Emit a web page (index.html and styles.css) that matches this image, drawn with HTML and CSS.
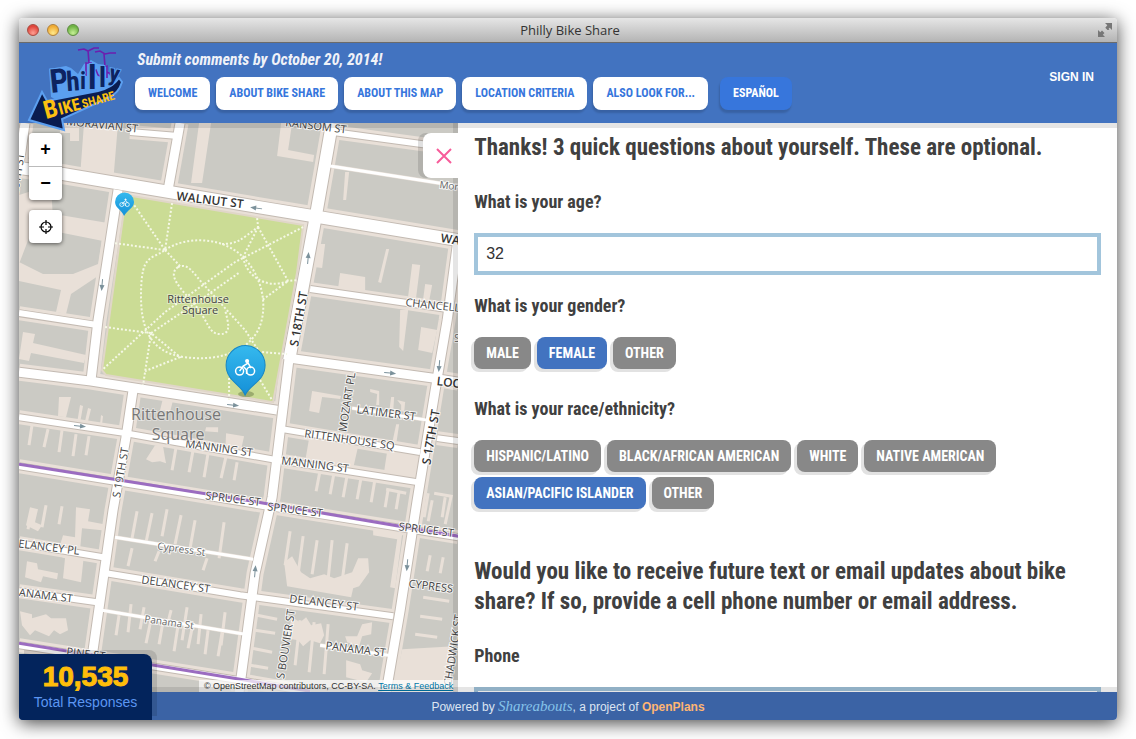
FILE: index.html
```html
<!DOCTYPE html>
<html lang="en">
<head>
<meta charset="utf-8">
<title>Philly Bike Share</title>
<link rel="stylesheet" href="styles.css">
</head>
<body>
<div class="window">
  <div class="titlebar">
    <div class="lights"><span class="light red"></span><span class="light amber"></span><span class="light green"></span></div>
    <div class="window-title">Philly Bike Share</div>
    <svg class="expand" width="16" height="16" viewBox="0 0 16 16" fill="#777"><path d="M8 1h7v7l-2.300-2.300-1.200 1.200 1 1L10.500 8 8.300 5.800 10.300 3.300z"/><path d="M1 8l2.300 2.200 1.700-1.700 2.500 2.500-1.700 1.700L8 15H1z"/></svg>
  </div>
  <header class="site-header">
    <a class="logo" href="#" aria-label="Philly Bike Share">
      <svg width="96" height="88" viewBox="27 44 96 88">
        <path d="M49 69L66 66 71 68 78 74 84 64 91 60 98 64 107 65 109 75 115 78 115 92 75 110 51 97z" fill="#5b9ff0"/>
        <path d="M29 120L42 92 47 101 98 91Q112 88 119 78L122 82Q119 93 108 98L62 119 64 130z" fill="#0a1c50" stroke="#5b9ff0" stroke-width="2"/>
        <g fill="none" stroke="#6c1fae" stroke-width="1.600">
          <path d="M78 50l6-1 4 2 6-3 5 0M95 52l5-1 5 3 5-1 6 0M88 50l1 13M104 54l1 12M86 76V63h5v14M102 75V66h5v12M92 72l4-2 2 5 4 2M107 72l4 2 1 6"/>
        </g>
        <g class="philly"><text x="51" y="93" transform="rotate(-6 51 93)" font-size="33">P</text><text x="67" y="91" transform="rotate(-4 67 91)" font-size="27">h</text><text x="80" y="89" font-size="24">i</text><text x="88" y="89" font-size="34">l</text><text x="99" y="87" font-size="28">l</text><text x="108" y="80" transform="rotate(12 108 80)" font-size="23">y</text></g>
        <g class="bikeshare"><text x="46" y="119" transform="rotate(-15 46 119)" font-size="25">B</text><text x="60" y="115" transform="rotate(-15 60 115)" font-size="17">IKE</text><text x="83" y="108" transform="rotate(-15 83 108)" font-size="12">SHARE</text></g>
      </svg>
    </a>
    <div class="header-body">
      <p class="deadline">Submit comments by October 20, 2014!</p>
      <nav class="nav">
        <a href="#">WELCOME</a><a href="#">ABOUT BIKE SHARE</a><a href="#">ABOUT THIS MAP</a><a href="#">LOCATION CRITERIA</a><a href="#">ALSO LOOK FOR...</a><a href="#" class="language">ESPAÑOL</a>
      </nav>
    </div>
    <a class="signin" href="#">SIGN IN</a>
  </header>
  <main class="main">
    <section class="map" aria-label="Map">
      <svg class="map-canvas" viewBox="19 123 439 569" preserveAspectRatio="xMinYMin slice">
        <defs>
          <g id="wide">
            <path d="M19 168L63 174 258 207 458 240"/><path d="M332 123L315 220 289 360"/>
          </g>
          <g id="medium">
            <path d="M289 358L433 378 458 382"/><path d="M458 238L447 320 435 390 417 500 400 610 386 692"/><path d="M289 358L272 497 255 573 239 692"/>
            <path d="M180 123L168 190"/><path d="M118 190L98 320 91 380"/><path d="M133 390L126 437 113 510 87 692"/><path d="M19 372L91 381 277 410"/><path d="M25 123L19 165"/>
          </g>
          <g id="narrow">
            <path d="M19 313L97 325"/><path d="M19 417L125 433 277 460 417 482"/><path d="M282 429L420 452"/><path d="M437 438L458 441"/>
            <path d="M19 466L258 505 458 537"/><path d="M310 289L407 303 447 309"/><path d="M333 132L458 149"/><path d="M130 132L178 136"/>
            <path d="M19 543L103 557"/><path d="M106 573L240 595 393 616"/><path d="M19 591L97 602"/><path d="M19 645L240 680 310 692"/>
          </g>
          <g id="thin">
            <path d="M330 166L458 186"/><path d="M115 537L253 559"/><path d="M102 610L245 634"/><path d="M320 645L388 655"/><path d="M352 408L427 420"/>
          </g>
          <g id="rider" fill="none" stroke="#fff" stroke-width="1.500"><circle cx="-5.500" cy="3" r="4"/><circle cx="5.500" cy="3" r="4"/><path d="M-5.500 3L-2-2 1.500 2V6M-2-2L3-5 6 0"/><circle cx="2" cy="-7" r="1.300" fill="#fff"/></g>
          <linearGradient id="pinfill" x2="0" y2="1"><stop offset="0" stop-color="#35b9ee"/><stop offset="1" stop-color="#1590d8"/></linearGradient>
          <g id="arrow" fill="#7b919b" stroke="#7b919b"><path d="M-6 0H3"/><path d="M6 0L0-2.500V2.500z" stroke="none"/></g>
        </defs>
        <rect x="19" y="123" width="439" height="569" fill="#cbcac4"/>
        <g class="verge">
          <use href="#wide" stroke-width="20"/><use href="#medium" stroke-width="17"/><use href="#narrow" stroke-width="14"/><use href="#thin" stroke-width="4"/>
        </g>
        <g class="lots">
          <path d="M84 123h34l-5 60-33-6zM60 123h19v18h-9v-8h-10zM199 123h12l-9 60h-11zM281 123h11l-4 27 26 5-1 7-36-6z"/>
          <path d="M19 195l32-10 2 35-18 2-16 42zM54 214l54 9-5 18-50-10zM19 262l24 12 30 0 30-12-2 12-30 20-5 20-10-2 5-22-42-9zM92 225l17 3-4 48-8-1 5-36z"/>
          <path d="M317 244h8l-3 24-8-1zM340 273l25 4v15l-27-4zM386 249h3l-8 34-3-1zM412 264l8 1-5 40-8-1zM425 284l7 1-4 21h-6zM345 172h4l-3 28h-3zM400 310h8l-5 41-4-4zM421 327l16 3-5 23-14-3z"/>
          <path d="M23 332l12 2-2 9 53 12-2 8-53-10-2 8-10-2zM59 397h12l-5 20-8-1zM80 405l3 1-3 17h-3zM88 408l3 1-3 12h-3zM101 415l2 1-1 8h-2z"/>
          <path d="M312 391l29 5-1 3-18-2-3 16-10-2zM370 389l9 2v14h-3l1-11-7-2zM391 397h3l-1 15h-4zM397 400l8 2-1 10-3-1v-6zM396 424h3l-3 20-4-1zM309 438l49 8-5 22-48-7zM387 451l30 4-4 20-29-4z"/>
          <path d="M155 445l8 1 2 12 1 5-6-2-8 1-6-3zM226 433l18 3-5 22-14-3zM206 427h12v5l-13-1zM163 398l10 2-3 12-10-2z"/>
          <path d="M76 507l14 2-2 12 16 3-2 6-20-2-2 22 4 4-3 28-18-4 2-20-8-3 6-20 12 2zM30 507l8 2-3 13 7 3-4 6-12-6zM27 561l10 2 1 6 20 4-1 6-14-3-2 6-16-5zM20 611l12 3v4l14-4 5 4 15 0 2 12-8 4-6-4-5 6-14-6-5 5-8-10z"/>
          <path d="M284 562l8-6 9 16 9 6 14-4 10 4 18-6 6-14 10 0 1 14-10 14-6 2-2 9-64-11zM373 529l29 5-7 54-5-1 7-48-24-4zM292 617l8 5 6-5 5 8 10-2 3 12-4 8-10-3-7 6-5-6-12-2zM345 636h12l5-12 10-2-1 12-9 2-3 10-12-4zM346 660l14 4 2 6 10 3-6 9-20-5zM402 649l52-3-5 46h-56z"/>
        </g>
        <g class="alleys">
          <path d="M32 425l-3 20M48 429l-4 18M62 430l-3 22M76 434l-3 22M89 436l-3 19M160 440l-4 19M176 447l-4 23M193 450l-4 22M208 453l-4 24M226 456l-5 22M237 462l-3 18M320 470l-4 21M334 472l-4 22M347 475l-4 22M361 477l-4 22M375 478l-4 24M388 489l-3 18M399 491l-3 18M386 489l20 4"/>
          <path d="M32 509l-4 20M46 505l-4 22M62 506l-3 18M137 511l-5 27M152 513l-6 29M167 509l-5 27M181 515l-6 29M195 520l-5 28M224 522l-5 36M132 548l-4 18M159 551l-4 10M207 558l-4 12M290 531l-5 34M303 536l-5 38M317 540l-5 34M332 540l-4 39M347 543l-5 38M131 604l-3 28M144 607l-4 22M171 610l-4 16M187 607l-5 33M201 614l-3 30M225 612l-4 33M119 615l-3 20M151 619l-5 24M163 621l-4 23M178 625l-4 26M192 628l-4 20M208 630l-3 24M222 632l-4 24"/>
          <path d="M430 555l-3 16M443 557l-3 16M423 597l26 4M420 616l22 3M415 634l22 3M432 500l-4 21M445 497l-3 20M257 615l20 4M255 630l20 3M252 648l20 4M250 665l18 3M300 620l-5 45M314 622l-5 50M328 624l-4 50M428 493l-4 24M434 493l17 3-6 28"/>
        </g>
        <g class="casing">
          <use href="#wide" stroke-width="14"/><use href="#medium" stroke-width="11"/><use href="#narrow" stroke-width="8"/>
        </g>
        <g class="road">
          <use href="#wide" stroke-width="12"/><use href="#medium" stroke-width="9"/><use href="#narrow" stroke-width="6"/><use href="#thin" stroke-width="3"/>
        </g>
        <g fill="none" stroke="#9b6cc0" stroke-width="3"><path d="M19 464L258 502 458 536"/><path d="M19 643L240 679 310 691"/></g>
        <path d="M126 195L303 225 297 272 273 402 106 375 102 370z" fill="#cbdc95" stroke="#e0d6c8" stroke-width="2"/>
        <g class="paths">
          <path d="M132 202L165 250 M172 203L165 250 114 243M303 227L235 262 165 312 102 370"/>
          <path d="M165 250C185 236 222 236 243 257S268 310 258 330 220 362 184 357 140 325 141 290 150 260 165 250"/>
          <path d="M165 250L180 266M178 267C188 262 194 274 204 285L245 330 258 350M178 267C166 275 182 290 195 305S208 334 220 334 228 322 225 310M257 218L258 227C240 240 238 244 220 244M258 227L288 281 297 280M243 257C246 275 265 290 288 281L262 300M105 327L151 333 180 357 145 371M151 333L143 385M151 333L200 300 240 272M229 362V400M262 352L287 354M258 227L243 257M260 380L272 400"/>
        </g>
        <g class="street bold">
          <text transform="translate(176 200) rotate(7)">WALNUT ST</text><text transform="translate(440 242) rotate(8)">WALNUT</text><text transform="translate(298 347) rotate(-80)">S 18TH ST</text><text transform="translate(436 385) rotate(7)">LOCUST ST</text><text transform="translate(430 465) rotate(-80)">S 17TH ST</text>
        </g>
        <g class="street">
          <text transform="translate(66 125) rotate(6)">MORAVIAN ST</text><text transform="translate(285 126) rotate(7)">RANSOM ST</text><text transform="translate(405 306) rotate(6)">CHANCELLOR</text><text transform="translate(356 413) rotate(7)">LATIMER ST</text><text transform="translate(304 437) rotate(8)">RITTENHOUSE SQ</text><text transform="translate(346 432) rotate(-81)">MOZART PL</text><text transform="translate(185 447) rotate(8)">MANNING ST</text><text transform="translate(281 464) rotate(7)">MANNING ST</text><text transform="translate(120 498) rotate(-80)">S 19TH ST</text><text transform="translate(205 499) rotate(7)">SPRUCE ST</text><text transform="translate(267 510) rotate(7)">SPRUCE ST</text><text transform="translate(398 530) rotate(7)">SPRUCE ST</text><text transform="translate(10 546) rotate(7)">DELANCEY PL</text><text transform="translate(141 583) rotate(8)">DELANCEY ST</text><text transform="translate(289 602) rotate(7)">DELANCEY ST</text><text transform="translate(12 595) rotate(7)">PANAMA ST</text><text transform="translate(325 649) rotate(7)">PANAMA ST</text><text transform="translate(408 587) rotate(7)">CYPRESS</text><text transform="translate(66 655) rotate(7)">PINE ST</text><text transform="translate(284 679) rotate(-81)">S BOUVIER ST</text><text transform="translate(451 686) rotate(-81)">CHADWICK ST</text><text transform="translate(18 195) rotate(-81)">20TH ST</text>
        </g>
        <g class="street small"><text transform="translate(439 188) rotate(7)">Moravian</text><text transform="translate(157 549) rotate(8)">Cypress St</text><text transform="translate(144 622) rotate(8)">Panama St</text><text x="454" y="342">S</text></g>
        <g class="place"><text x="198" y="303">Rittenhouse</text><text x="200" y="314">Square</text></g>
        <g class="place large"><text x="176" y="420">Rittenhouse</text><text x="178" y="440">Square</text></g>
        <use href="#arrow" transform="translate(256 208) rotate(188)"/><use href="#arrow" transform="translate(308 258) rotate(-85)"/><use href="#arrow" transform="translate(102 285) rotate(95)"/><use href="#arrow" transform="translate(233 405) rotate(5)"/><use href="#arrow" transform="translate(80 426) rotate(5)"/><use href="#arrow" transform="translate(390 373) rotate(5)"/><use href="#arrow" transform="translate(439 366) rotate(95)"/><use href="#arrow" transform="translate(255 571) rotate(-85)"/><use href="#arrow" transform="translate(407 565) rotate(95)"/>
        <ellipse cx="246" cy="394" rx="8" ry="3" fill="#6c7b45" opacity=".5"/>
        <path d="M245 395C241 384 226 381 226 365a19.500 19.500 0 0 1 39 0C265 381 250 384 245 395z" fill="url(#pinfill)" stroke="#1786c4"/><use href="#rider" transform="translate(245 368)"/>
        <path d="M124 216C122 210 115 208 115 202a9.500 9.500 0 0 1 19 0C134 208 127 210 124 216z" fill="url(#pinfill)"/><use href="#rider" transform="translate(124.500 203) scale(.5)"/>
      </svg>
      <div class="map-controls">
        <div class="zoom"><button type="button" aria-label="Zoom in">+</button><button type="button" aria-label="Zoom out">−</button></div>
        <button type="button" class="locate" aria-label="Locate me"><svg width="14" height="14" viewBox="0 0 14 14" fill="none" stroke="#000" stroke-width="1.200"><circle cx="7" cy="7" r="5"/><path d="M7 0v5M7 9v5M0 7h5M9 7h5"/></svg></button>
      </div>
      <p class="attribution">© OpenStreetMap contributors, CC-BY-SA. <a href="#">Terms &amp; Feedback</a></p>
      <button type="button" class="close" aria-label="Close"><svg width="16" height="16" viewBox="0 0 16 16" stroke="#f75c9a" stroke-width="2"><path d="M1 1l14 14M15 1L1 15"/></svg></button>
    </section>
    <form class="panel">
      <h2>Thanks! 3 quick questions about yourself. These are optional.</h2>
      <label class="question" for="age">What is your age?</label>
      <input class="field" id="age" type="text" value="32">
      <fieldset class="gender">
        <legend>What is your gender?</legend>
        <div class="choices">
          <label><input type="radio" name="gender"><span>MALE</span></label>
          <label><input type="radio" name="gender" checked><span>FEMALE</span></label>
          <label><input type="radio" name="gender"><span>OTHER</span></label>
        </div>
      </fieldset>
      <fieldset>
        <legend>What is your race/ethnicity?</legend>
        <div class="choices">
          <label><input type="checkbox"><span>HISPANIC/LATINO</span></label>
          <label><input type="checkbox"><span>BLACK/AFRICAN AMERICAN</span></label>
          <label><input type="checkbox"><span>WHITE</span></label>
          <label><input type="checkbox"><span>NATIVE AMERICAN</span></label>
          <label><input type="checkbox" checked><span>ASIAN/PACIFIC ISLANDER</span></label>
          <label><input type="checkbox"><span>OTHER</span></label>
        </div>
      </fieldset>
      <h2 class="updates">Would you like to receive future text or email updates about bike share? If so, provide a cell phone number or email address.</h2>
      <label class="question" for="phone">Phone</label>
      <input class="field" id="phone" type="text">
    </form>
  </main>
  <footer class="footer">
    <p>Powered by <a class="shareabouts" href="#">Shareabouts</a>, a project of <a class="openplans" href="#">OpenPlans</a></p>
    <div class="counter"><strong>10,535</strong><span>Total Responses</span></div>
  </footer>
</div>
</body>
</html>
```
FILE: styles.css
```css
:root {
  --sans: "Liberation Sans", Arial, sans-serif;
  --narrow: "Arial Narrow", "Liberation Sans Narrow", "Roboto Condensed", "Open Sans Condensed", "Liberation Sans", sans-serif;
}
* { box-sizing: border-box; }
body {
  margin: 0;
  height: 100vh;
  padding: 18px 19px 19px;
  background: #fff;
  color: #404040;
  font-family: var(--sans);
}
h2, p, fieldset, legend { margin: 0; padding: 0; border: 0; }
button { border: 0; padding: 0; font: inherit; }
.window {
  display: flex;
  flex-direction: column;
  height: 100%;
  border-radius: 4px;
  box-shadow: 0 3px 18px rgba(0, 0, 0, .75);
}

/* Title bar */
.titlebar {
  display: grid;
  grid-template-columns: 1fr auto 1fr;
  align-items: center;
  height: 25px;
  padding: 0 4px 0 8px;
  border-radius: 4px 4px 0 0;
  border-bottom: 1px solid #6b6b6b;
  background: linear-gradient(#e6e6e6, #b4b4b4);
}
.lights { display: flex; gap: 8px; }
.light { width: 12px; height: 12px; border: 1px solid; border-radius: 50%; }
.red { border-color: #a84a40; background: radial-gradient(circle at 50% 80%, #ff9f92, #e0463c 70%); }
.amber { border-color: #b0803a; background: radial-gradient(circle at 50% 80%, #ffe98c, #f0ac34 70%); }
.green { border-color: #5c8b40; background: radial-gradient(circle at 50% 80%, #c6f096, #70b445 70%); }
.window-title { color: #333; font: 13px/22px "Open Sans", "Noto Sans", sans-serif; }
.expand { justify-self: end; }

/* Header */
.site-header {
  position: relative;
  z-index: 3;
  display: flex;
  height: 80px;
  padding: 0 23px 0 8px;
  background: #4273c0;
  box-shadow: 0 5px 0 rgba(0, 0, 0, .1);
}
.logo { width: 96px; height: 88px; padding-top: 1px; }
.logo svg { display: block; overflow: visible; }
.philly {
  fill: #0d2360;
  stroke: #5b9ff0;
  stroke-width: 2px;
  paint-order: stroke;
  font-family: var(--narrow);
  font-weight: bold;
}
.bikeshare { fill: #fcc010; font-family: var(--narrow); font-weight: bold; }
.header-body { flex: 1; padding: 7px 0 0 12px; }
.deadline { padding-left: 2px; color: #f0f2f8; font: italic bold 16px/20px var(--narrow); }
.nav { display: flex; gap: 6px; margin-top: 7px; }
.nav a {
  padding: 0 13px;
  border-radius: 8px;
  background: #fff;
  box-shadow: -1px 3px 2px rgba(0, 0, 0, .15);
  color: #3776dc;
  font: bold 12px/33px var(--narrow);
  text-decoration: none;
}
.nav .language { margin-left: 6px; background: #3776dc; color: #fff; }
.signin { padding-top: 26px; color: #fff; font: bold 12px/16px var(--sans); text-decoration: none; }

/* Map */
.main { display: grid; grid-template-columns: 2fr 3fr; flex: 1; min-height: 0; }
.map { position: relative; overflow: hidden; min-height: 0; }
.map::after {
  content: "";
  position: absolute;
  inset: 0 0 0 auto;
  width: 5px;
  background: rgba(0, 0, 0, .1);
  pointer-events: none;
}
.map-canvas { display: block; width: 100%; height: 100%; }
.verge { fill: none; stroke: #e9e0d8; }
.lots { fill: #e9e0d8; }
.alleys { fill: none; stroke: #e9e0d8; stroke-width: 3; }
.casing { fill: none; stroke: #c3bab2; }
.road { fill: none; stroke: #fff; stroke-linejoin: round; }
.paths { fill: none; stroke: #f5f8e6; stroke-width: 2; stroke-dasharray: 2 2; }
.street, .place {
  fill: #444;
  stroke: #fff;
  stroke-opacity: .8;
  stroke-width: 2px;
  paint-order: stroke;
  font: 11px "Open Sans", "Noto Sans", sans-serif;
}
.bold { font-weight: 600; font-size: 12px; fill: #333; }
.small { fill: #666; font-size: 10px; }
.place { text-anchor: middle; stroke-opacity: .4; }
.large { font-size: 16px; fill: #777; }
.map-controls { position: absolute; top: 10px; left: 10px; display: grid; gap: 10px; }
.map-controls button { display: grid; place-items: center; width: 33px; height: 33px; background: #fff; color: #000; font: bold 18px/33px var(--sans); }
.map-controls .zoom, .map-controls .locate { border-radius: 4px; box-shadow: 0 1px 4px rgba(0, 0, 0, .6); }
.zoom { overflow: hidden; }
.map-controls .zoom button + button { height: 34px; border-top: 1px solid #bbb; }
.close {
  position: absolute;
  z-index: 1;
  top: 10px;
  right: 0;
  display: grid;
  place-items: center;
  width: 35px;
  height: 45px;
  border-radius: 8px 0 0 8px;
  background: #fff;
  box-shadow: -5px 0 0 rgba(0, 0, 0, .12);
}
.close svg { margin-left: 6px; }
.attribution {
  position: absolute;
  right: 0;
  bottom: 0;
  padding: 0 5px;
  background: rgba(255, 255, 255, .7);
  color: #333;
  font-size: 9px;
  line-height: 12px;
  white-space: nowrap;
}
.attribution a { color: #0078a8; }

/* Survey */
.panel {
  overflow: hidden;
  padding: 10px 16px 0;
  background: #fff;
  font-family: var(--narrow);
}
h2 { font-size: 23px; line-height: 30px; }
.question, legend { display: block; font-size: 18px; font-weight: bold; line-height: 24px; }
.question { margin: 27px 0 19px; }
.field {
  display: block;
  width: 100%;
  height: 42px;
  padding: 0 8px;
  border: 4px solid #a2c5dc;
  background: #fff;
  color: #333;
  font: 16px var(--sans);
}
fieldset { margin-top: 28px; }
.gender { margin-top: 19px; }
.choices { display: flex; flex-wrap: wrap; gap: 5px 6px; padding-top: 19px; }
.choices label { position: relative; }
.choices input { position: absolute; inset: 0; margin: 0; opacity: 0; }
.choices span {
  display: block;
  padding: 0 12px;
  border-radius: 8px;
  background: #888;
  box-shadow: -3px 3px 0 #e2e2e2;
  color: #fff;
  font-size: 14px;
  font-weight: bold;
  line-height: 32px;
}
.choices input:checked + span { background: #4273c0; }
.updates { margin-top: 48px; }

/* Footer */
.footer {
  position: relative;
  z-index: 2;
  height: 28px;
  border-radius: 0 0 4px 4px;
  background: #3b63a5;
  box-shadow: 0 -5px 0 rgba(0, 0, 0, .1);
  color: #dde5f2;
  font-size: 12px;
  line-height: 31px;
  text-align: center;
}
.footer a { text-decoration: none; }
.footer .shareabouts { color: #86c4ea; font: italic 15px/20px "Liberation Serif", serif; }
.footer .openplans { color: #ffb573; font-weight: bold; }
.counter {
  position: absolute;
  left: 0;
  bottom: 0;
  display: grid;
  width: 133px;
  height: 66px;
  align-content: center;
  border-radius: 0 8px 0 4px;
  background: #03245c;
  box-shadow: 5px -4px 0 rgba(0, 0, 0, .12);
  color: #5c96f2;
  font-size: 14px;
  line-height: 20px;
}
.counter strong { color: #ffbe0a; font-size: 28px; line-height: 30px; -webkit-text-stroke: 1px #ffbe0a; }
```
